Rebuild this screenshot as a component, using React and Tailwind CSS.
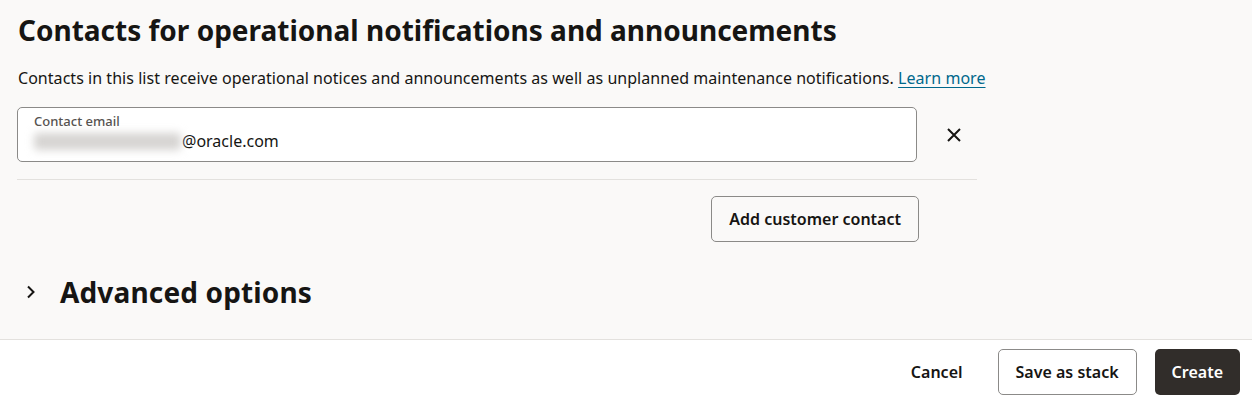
import React from 'react';

export default function App() {
    return (
        <div className="w-[1252px] h-[403px] flex flex-col bg-[#faf9f8] text-[#161513]" style={{ fontFamily: '"Noto Sans", "Open Sans", sans-serif' }}>
            <div className="flex-1 pl-[18px]">
                <h1 className="text-[28px] font-bold leading-[36px] pt-[12px]">
                    Contacts for operational notifications and announcements
                </h1>
                <p className="text-[16px] leading-[24px] mt-[18px] tracking-[0.04px] text-[#161513]">
                    Contacts in this list receive operational notices and announcements as well as unplanned maintenance notifications.{' '}
                    <a href="#" className="text-[#00688c] underline underline-offset-[3px]">Learn more</a>
                </p>

                {/* contact row */}
                <div className="w-[960px] mt-[17px] flex items-center">
                    <div className="w-[900px] h-[55px] bg-white border border-[#8b8a88] rounded-[5px] -ml-px pl-[16px] pt-[5px]">
                        <div className="text-[13px] leading-[16px] text-[#55524f] font-medium">Contact email</div>
                        <div className="flex items-center text-[16px] leading-[24px]">
                            <span className="w-[147px] h-[17px] bg-[#d6d4d2] blur-[4px] rounded-sm mr-[1px]"></span>
                            <span>@oracle.com</span>
                        </div>
                    </div>
                    <button className="ml-[29px] w-[16px] h-[16px] flex items-center justify-center">
                        <svg width="16" height="16" viewBox="0 0 16 16" fill="none" stroke="#161513" strokeWidth="2">
                            <path d="M2 2 L14 14 M14 2 L2 14" />
                        </svg>
                    </button>
                </div>
                <div className="w-[960px] h-px bg-[#e3e1de] -ml-px mt-[17px]"></div>
                <div className="w-[900px] flex justify-end mt-[16px]">
                    <button className="h-[46px] px-[17px] border border-[#8b8a88] rounded-[5px] text-[16px] font-semibold bg-[#faf9f8] -mr-px">
                        Add customer contact
                    </button>
                </div>

                <div className="flex items-center mt-[32px]">
                    <svg width="12" height="14" viewBox="0 0 12 14" fill="none" stroke="#161513" strokeWidth="2" className="ml-[7px]">
                        <path d="M3 1.5 L8.5 7 L3 12.5" />
                    </svg>
                    <h2 className="text-[28px] font-bold leading-[36px] ml-[23px] tracking-[0.15px]">Advanced options</h2>
                </div>
            </div>

            <div className="h-[64px] border-t border-[#e3e1de] bg-white flex items-center justify-end pr-[12px] gap-[18px]">
                <button className="h-[46px] px-[17px] text-[16px] font-semibold">Cancel</button>
                <button className="h-[46px] px-[17px] border border-[#8b8a88] rounded-[5px] text-[16px] font-semibold bg-white">Save as stack</button>
                <button className="h-[46px] px-[17px] rounded-[5px] text-[16px] font-semibold bg-[#312d2a] text-white">Create</button>
            </div>
        </div>
    );
}
